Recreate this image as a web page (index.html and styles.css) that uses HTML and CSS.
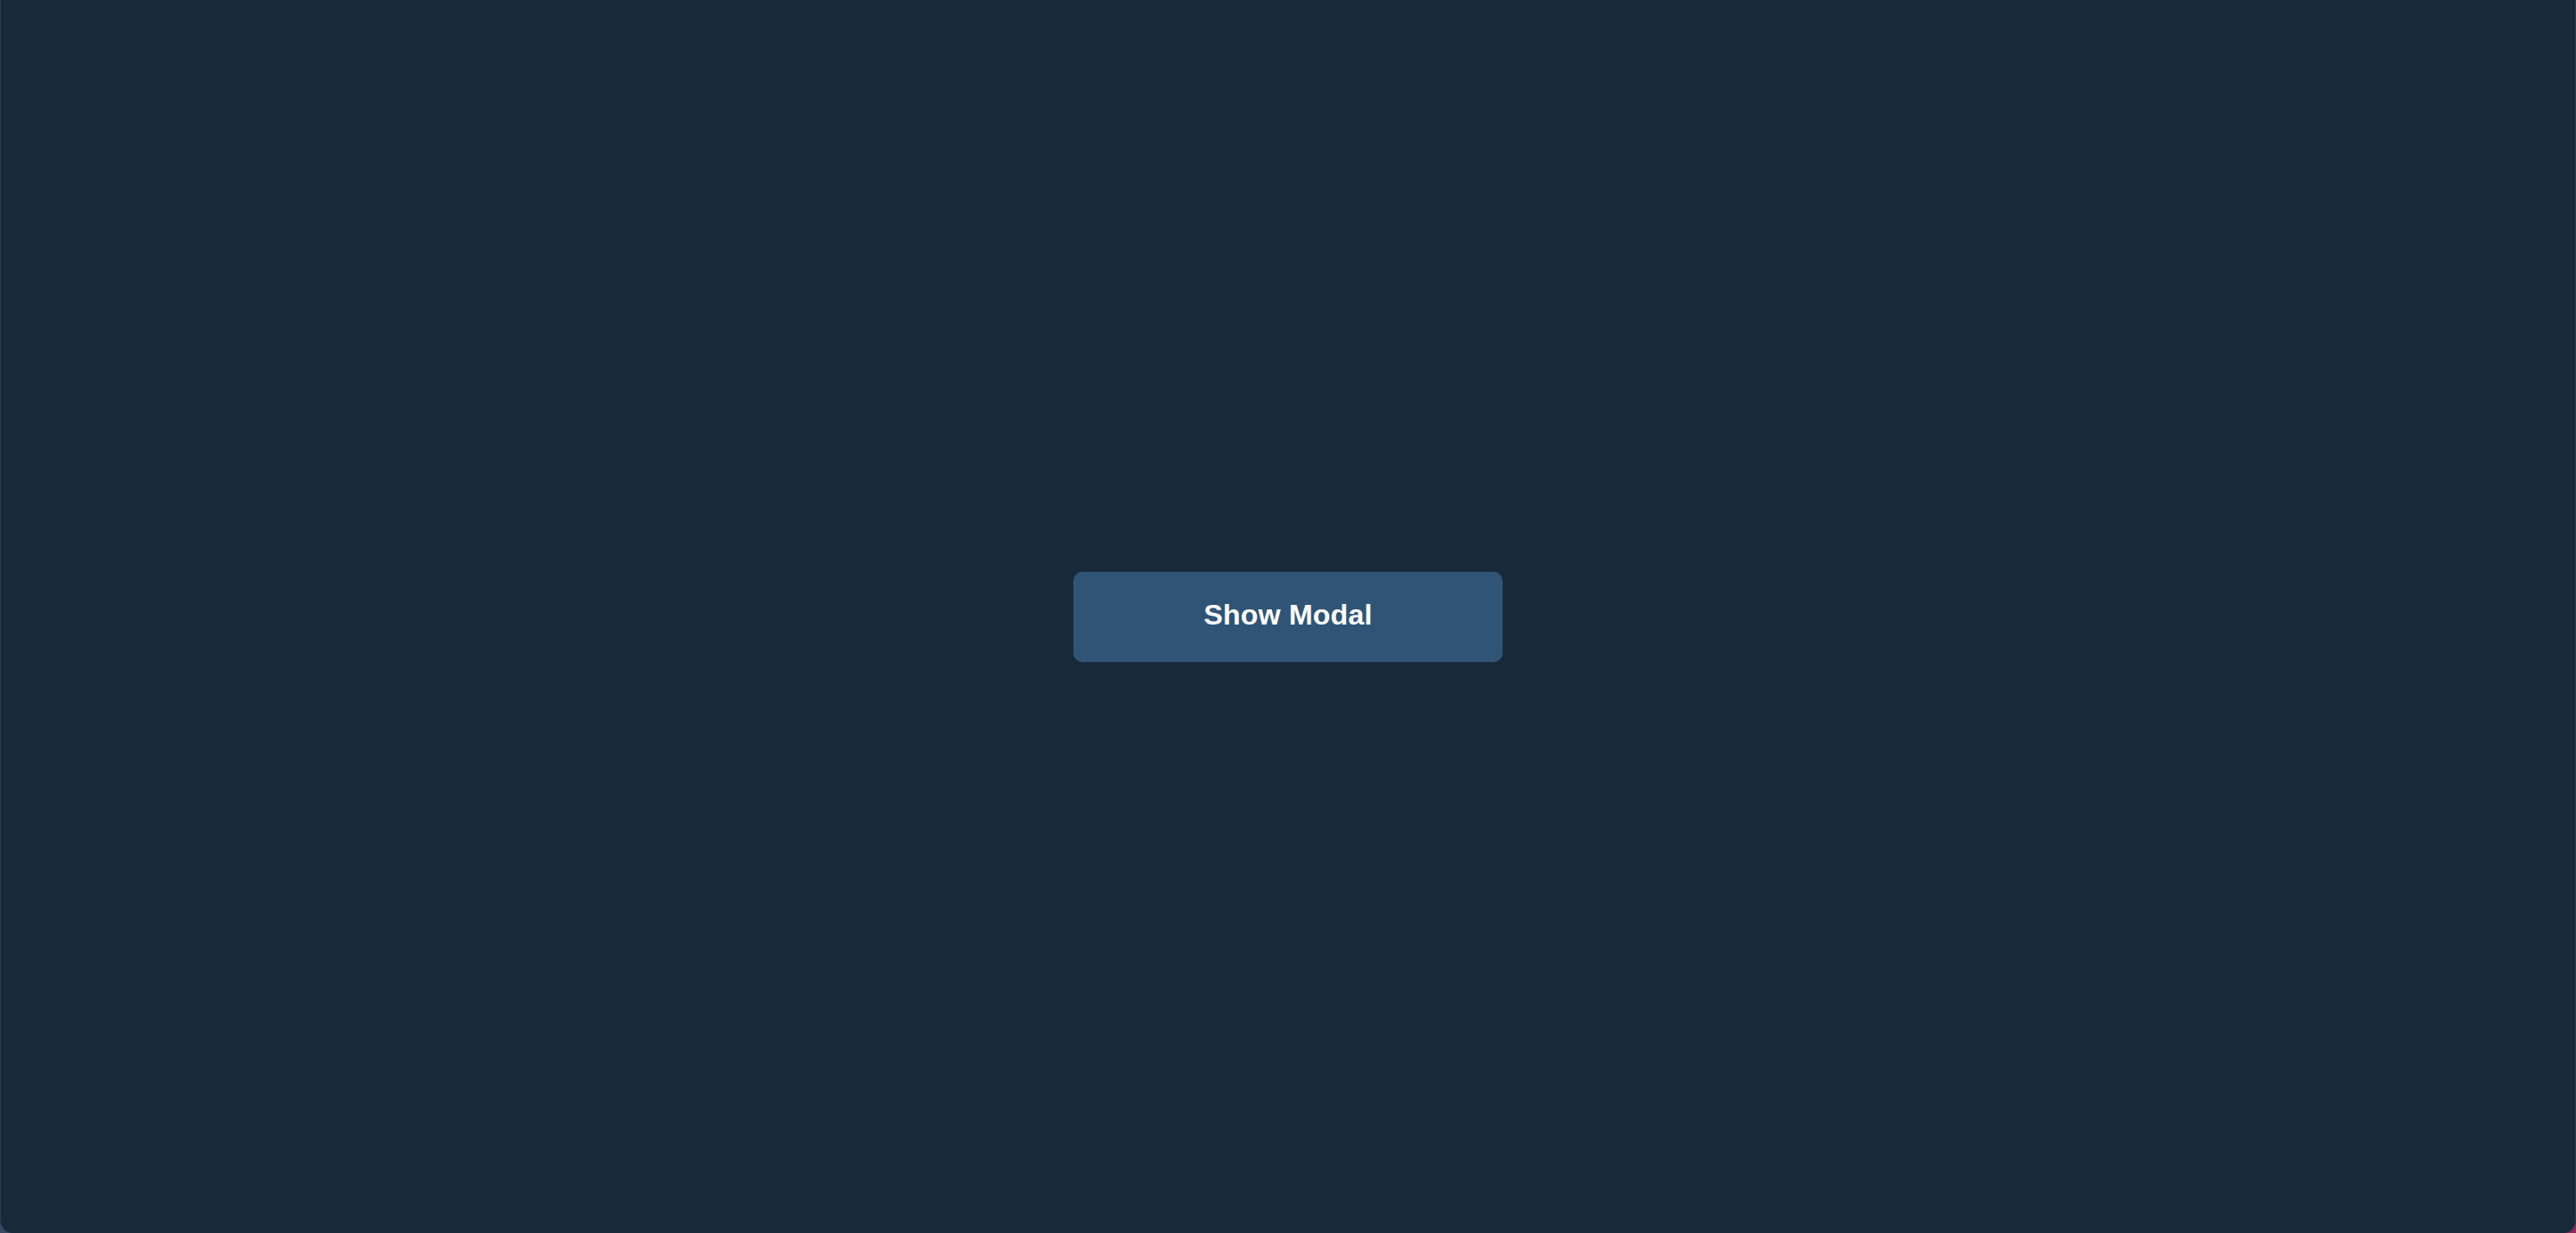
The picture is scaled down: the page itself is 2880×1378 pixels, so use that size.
FILE: index.html
```html
<!DOCTYPE html>
<html lang="en">
<head>
<meta charset="utf-8">
<title>Show Modal</title>
<link rel="stylesheet" href="styles.css">
</head>
<body>
<div class="backdrop">
  <main class="stage">
    <button class="show-btn" type="button">Show Modal</button>
  </main>
</div>
</body>
</html>
```
FILE: styles.css
```css
html, body {
  margin: 0;
  padding: 0;
  height: 100%;
}
body {
  font-family: "Liberation Sans", Arial, sans-serif;
}
.backdrop {
  height: 100%;
  background: linear-gradient(90deg, #3a4a66 0%, #2a3650 50%, #8a2a58 100%);
}
.stage {
  box-sizing: border-box;
  height: 100%;
  display: flex;
  align-items: center;
  justify-content: center;
  background: #182939;
  border-left: 1px solid #2a3a4c;
  border-right: 1px solid #2a3a4c;
  border-radius: 0 0 14px 14px;
}
.show-btn {
  box-sizing: border-box;
  width: 480px;
  height: 101px;
  border: none;
  border-radius: 10px;
  background: #2f5475;
  color: #ffffff;
  font-family: "Liberation Sans", Arial, sans-serif;
  font-weight: bold;
  font-size: 32px;
  letter-spacing: 0.2px;
  cursor: pointer;
  padding: 0 0 3px 0;
}
```
